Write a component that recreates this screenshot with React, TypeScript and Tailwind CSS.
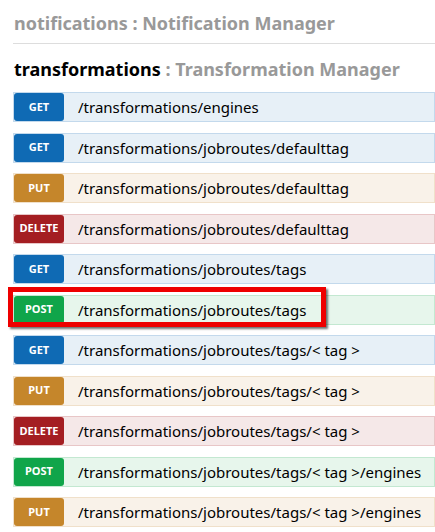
import React from "react";

type M = "GET" | "PUT" | "POST" | "DELETE";

const rows: { m: M; p: string; hl?: boolean }[] = [
  { m: "GET", p: "/transformations/engines" },
  { m: "GET", p: "/transformations/jobroutes/defaulttag" },
  { m: "PUT", p: "/transformations/jobroutes/defaulttag" },
  { m: "DELETE", p: "/transformations/jobroutes/defaulttag" },
  { m: "GET", p: "/transformations/jobroutes/tags" },
  { m: "POST", p: "/transformations/jobroutes/tags", hl: true },
  { m: "GET", p: "/transformations/jobroutes/tags/< tag >" },
  { m: "PUT", p: "/transformations/jobroutes/tags/< tag >" },
  { m: "DELETE", p: "/transformations/jobroutes/tags/< tag >" },
  { m: "POST", p: "/transformations/jobroutes/tags/< tag >/engines" },
  { m: "PUT", p: "/transformations/jobroutes/tags/< tag >/engines" },
];

const rowStyle: Record<M, string> = {
  GET: "bg-[#e7f0f7] border-[#c3d9ec]",
  PUT: "bg-[#f9f2e9] border-[#f0e0ca]",
  POST: "bg-[#e7f6ec] border-[#c3e8d1]",
  DELETE: "bg-[#f5e8e8] border-[#e8c6c7]",
};

const badgeStyle: Record<M, string> = {
  GET: "bg-[#0f6ab4]",
  PUT: "bg-[#c5862b]",
  POST: "bg-[#10a54a]",
  DELETE: "bg-[#a41e22]",
};

export default function App() {
  return (
    <div
      className="w-[435px] h-[532px] overflow-hidden bg-white pl-[13px]"
      style={{ fontFamily: '"Noto Sans", "Open Sans", sans-serif' }}
    >
      <div className="pt-[9px] pb-[6px] border-b border-[#dddddd] pl-px">
        <h2 className="text-[18px] leading-[28px] font-bold text-[#999999] whitespace-nowrap">
          notifications : Notification Manager
        </h2>
      </div>
      <div className="mt-[11px] pl-px">
        <h2 className="text-[18px] leading-[28px] font-bold text-[#999999] whitespace-nowrap">
          <span className="text-black">transformations</span> : Transformation Manager
        </h2>
      </div>
      <div className="mt-[9px] flex flex-col gap-[10.5px]">
        {rows.map((r, i) => (
          <div
            key={i}
            className={`relative h-[30px] border flex items-center ${rowStyle[r.m]}`}
          >
            <span
              className={`shrink-0 w-[50px] h-[28px] rounded-[3px] flex items-center justify-center text-white font-bold text-[11px] ${badgeStyle[r.m]}`}
            >
              {r.m}
            </span>
            <span className="ml-[14px] text-[15px] text-black leading-[28px] whitespace-nowrap">
              {r.p}
            </span>
            {r.hl && (
              <div className="absolute left-[-6px] top-[-9px] w-[318px] h-[40px] border-[5px] border-[#ee0000] shadow-[2px_2px_2px_rgba(0,0,0,0.55)]" />
            )}
          </div>
        ))}
      </div>
    </div>
  );
}
